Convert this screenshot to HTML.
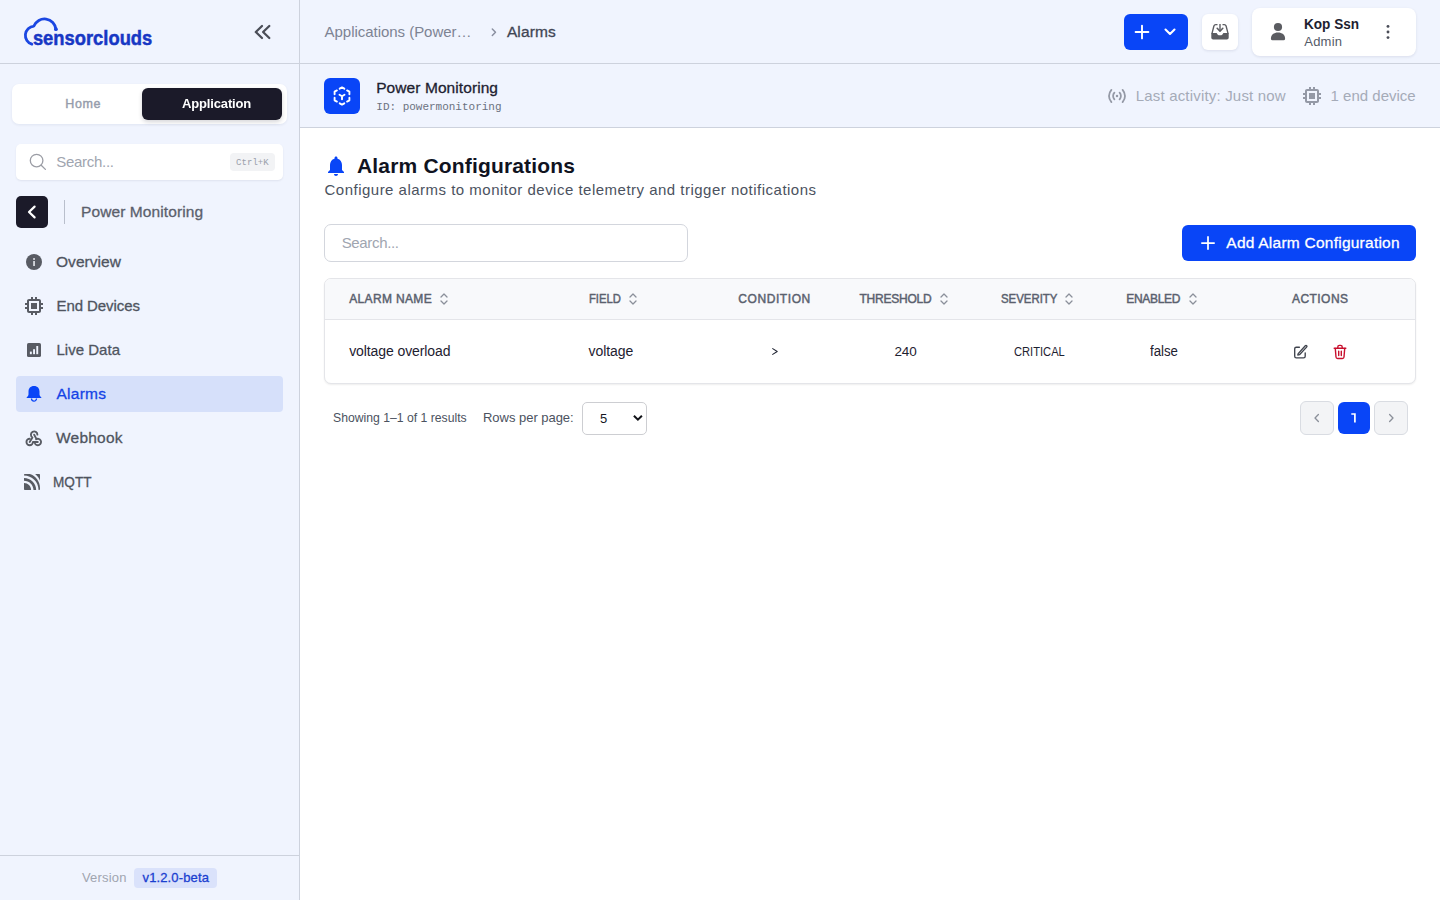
<!DOCTYPE html>
<html><head><meta charset="utf-8"><title>Alarms</title>
<style>
*{box-sizing:border-box;margin:0;padding:0}
html,body{width:1440px;height:900px;overflow:hidden;background:#fff;font-family:"Liberation Sans",sans-serif;color:#1d2130}
.t{position:absolute;white-space:nowrap;display:block}
.b{position:absolute;display:block}
svg{position:absolute;display:block;overflow:visible}

</style></head><body>
<!-- backgrounds -->
<div class="b" style="left:0;top:0;width:1440px;height:128px;background:#f0f4fe"></div>
<div class="b" style="left:0;top:0;width:300px;height:900px;background:#f0f4fe"></div>
<div class="b" style="left:299px;top:0;width:1px;height:900px;background:#cdd2dd"></div>
<div class="b" style="left:0;top:63px;width:1440px;height:1px;background:#cdd2dd"></div>
<div class="b" style="left:300px;top:127px;width:1140px;height:1px;background:#cdd2dd"></div>
<div class="b" style="left:0;top:855px;width:299px;height:1px;background:#cdd2dd"></div>

<!-- logo -->
<svg style="left:0;top:0" width="170" height="60" viewBox="0 0 170 60">
  <path d="M31.900 44.200 A9.300 9.300 0 0 1 33.900 26.050 A11.450 11.450 0 0 1 55.900 29.200" fill="none" stroke="#1b47e2" stroke-width="2.800" stroke-linecap="round" stroke-linejoin="round"/>
  <circle cx="55.900" cy="29.200" r="1.900" fill="#1b47e2"/>
  <text x="32.900" y="45.300" font-family="Liberation Sans, sans-serif" font-weight="bold" font-size="20.800" fill="#1737c4" stroke="#1737c4" stroke-width="0.500" textLength="119.400" lengthAdjust="spacingAndGlyphs">sensorclouds</text>
</svg>
<!-- collapse -->
<svg style="left:254px;top:24px" width="18" height="16" viewBox="0 0 18 16"><path d="M8 2 L1.800 8 L8 14 M15.300 2 L9.100 8 L15.300 14" fill="none" stroke="#4b4e58" stroke-width="2.300" stroke-linecap="round" stroke-linejoin="round"/></svg>

<!-- tabs -->
<div class="b" style="left:12px;top:84px;width:275px;height:40px;background:#fff;border-radius:7px;box-shadow:0 1px 3px rgba(20,30,70,.07)"></div>
<div class="b" style="left:142px;top:88px;width:140px;height:32px;background:#1b1a29;border-radius:6px;box-shadow:0 2px 4px rgba(20,20,40,.18)"></div>
<!-- sidebar search -->
<div class="b" style="left:16px;top:144px;width:267px;height:36px;background:#fff;border-radius:5px;box-shadow:0 1px 2px rgba(20,30,70,.08)"></div>
<svg style="left:29px;top:153px" width="18" height="18" viewBox="0 0 18 18"><circle cx="7.600" cy="7.600" r="6.300" fill="none" stroke="#9b9da5" stroke-width="1.300"/><path d="M12.200 12.200 L16.400 16.400" stroke="#9b9da5" stroke-width="1.300" stroke-linecap="round"/></svg>
<div class="b" style="left:230px;top:153px;width:45px;height:18px;background:#f2f3f5;border-radius:4px"></div>
<!-- back -->
<div class="b" style="left:16px;top:196px;width:32px;height:32px;background:#1b1a29;border-radius:5px"></div>
<svg style="left:26px;top:205px" width="12" height="14" viewBox="0 0 12 14"><path d="M8.6 1.6 L3 7 L8.6 12.4" fill="none" stroke="#fff" stroke-width="2.2" stroke-linecap="round" stroke-linejoin="round"/></svg>
<div class="b" style="left:64px;top:200px;width:1px;height:24px;background:#b9bfcc"></div>

<!-- nav active bg -->
<div class="b" style="left:16px;top:376px;width:267px;height:36px;background:#d6e0fa;border-radius:4px"></div>
<!-- nav icons -->
<svg style="left:26px;top:254px" width="16" height="16" viewBox="0 0 16 16"><circle cx="8" cy="8" r="8" fill="#585b63"/><rect x="7.2" y="7" width="1.7" height="5" fill="#dfe1e6"/><rect x="7.2" y="4.1" width="1.7" height="1.8" fill="#dfe1e6"/></svg>
<svg style="left:22px;top:294px" width="24" height="24" viewBox="0 0 24 24"><path fill="#585b63" d="M15 9H9v6h6V9zm6 2V9h-2V7c0-1.100-.9-2-2-2h-2V3h-2v2h-2V3H9v2H7c-1.100 0-2 .9-2 2v2H3v2h2v2H3v2h2v2c0 1.100.9 2 2 2h2v2h2v-2h2v2h2v-2h2c1.100 0 2-.9 2-2v-2h2v-2h-2v-2h2zm-4 6H7V7h10v10z"/></svg>
<svg style="left:27px;top:343px" width="14" height="14" viewBox="0 0 14 14"><rect x="0" y="0" width="14" height="14" rx="1.6" fill="#585b63"/><rect x="2.9" y="8.6" width="1.9" height="2.6" fill="#f0f4fe"/><rect x="6.1" y="6.2" width="1.9" height="5" fill="#f0f4fe"/><rect x="9.3" y="3" width="1.9" height="8.200" fill="#f0f4fe"/></svg>
<svg style="left:26px;top:386px" width="16" height="16" viewBox="0 0 16 16"><path fill="#0945f7" d="M8 0 C4.400 0 2.500 2.300 2.500 5.600 V8.300 C2.500 9.700 1.600 10.500 0.700 11.300 V12.100 H15.300 V11.300 C14.400 10.500 13.500 9.700 13.500 8.300 V5.600 C13.500 2.300 11.600 0 8 0 Z"/><path d="M5.500 12.600 A2.500 2.500 0 0 0 10.500 12.600" fill="none" stroke="#0945f7" stroke-width="1.300"/></svg>
<svg style="left:24.300px;top:429.200px" width="19.500" height="19.500" viewBox="0 0 24 24" fill="none" stroke="#585b63" stroke-width="2.300" stroke-linecap="round" stroke-linejoin="round"><path d="M16.500 7 A4 4 0 1 0 10.400 10.400 L7 16"/><path d="M7 12 A4 4 0 1 0 11 16 L17 16"/><path d="M12.500 7 L15.300 12.200"/><path d="M15 12.540 A4 4 0 1 1 13.540 18"/></svg>
<svg style="left:24px;top:474px" width="16" height="16" viewBox="0 0 24 24"><path fill="#585b63" d="M10.657 23.994h-9.450A1.212 1.212 0 0 1 0 22.788v-9.180h.071c5.784 0 10.504 4.650 10.586 10.386Zm7.606 0h-4.045C14.135 16.246 7.795 9.977 0 9.977V6.024c9.954 0 18.176 8.030 18.263 17.970Zm4.530 0h-.970C21.754 12.071 11.995 2.407 0 2.407v-1.200A1.212 1.212 0 0 1 1.207 0h7.630C17.503 2.757 24 11.043 24 21.009v1.779a1.210 1.210 0 0 1-1.207 1.206ZM16.713.006h6.080A1.212 1.212 0 0 1 24 1.212v8.844C22.595 6.128 19.950 2.601 16.713.006Z"/></svg>

<!-- version badge -->
<div class="b" style="left:134px;top:868px;width:83px;height:20px;background:#dae2fb;border-radius:4px"></div>

<!-- breadcrumb chevron -->
<svg style="left:490px;top:27px" width="8" height="11" viewBox="0 0 8 11"><path d="M2.300 1.900 L5.500 5.200 L2.300 8.500" fill="none" stroke="#8a8fa0" stroke-width="1.450" stroke-linecap="round" stroke-linejoin="round"/></svg>

<!-- top right: plus button -->
<div class="b" style="left:1124px;top:14px;width:64px;height:36px;background:#0945f7;border-radius:6px"></div>
<svg style="left:1135px;top:25px" width="14" height="14" viewBox="0 0 14 14"><path d="M7 0.600 V13.400 M0.600 7 H13.400" stroke="#fff" stroke-width="1.9" stroke-linecap="round"/></svg>
<svg style="left:1164px;top:28px" width="12" height="8" viewBox="0 0 12 8"><path d="M1.500 1.600 L6 6 L10.500 1.600" fill="none" stroke="#fff" stroke-width="2.1" stroke-linecap="round" stroke-linejoin="round"/></svg>
<!-- inbox button -->
<div class="b" style="left:1202px;top:14px;width:36px;height:36px;background:#fff;border-radius:6px;box-shadow:0 1px 3px rgba(20,30,70,.10)"></div>
<svg style="left:1211px;top:24px" width="18" height="16" viewBox="0 0 18 16"><path d="M0.300 9 H5.600 L6.600 10.600 Q7 11.300 7.800 11.300 H10.200 Q11 11.300 11.400 10.600 L12.400 9 H17.700 V13.800 Q17.700 15.600 15.900 15.600 H2.100 Q0.300 15.600 0.300 13.800 Z" fill="#5b5c61"/><path d="M0.950 9.600 L2.900 2 Q3.300 0.650 4.800 0.650 H6.500 M11.500 0.650 H13.200 Q14.700 0.650 15.100 2 L17.050 9.600" fill="none" stroke="#5b5c61" stroke-width="1.350"/><path d="M9 0 V6.400" fill="none" stroke="#5b5c61" stroke-width="1.400"/><path d="M6.200 4.300 L9 7.200 L11.800 4.300" fill="none" stroke="#5b5c61" stroke-width="1.600" stroke-linejoin="round" stroke-linecap="round"/></svg>
<!-- user card -->
<div class="b" style="left:1252px;top:8px;width:164px;height:48px;background:#fff;border-radius:8px;box-shadow:0 1px 3px rgba(20,30,70,.10)"></div>
<svg style="left:1270px;top:22px" width="16" height="19" viewBox="0 0 16 19"><circle cx="8" cy="5" r="4.100" fill="#5b5c61"/><path d="M0.900 16.700 C0.900 12.600 3.900 10.500 8 10.500 C12.100 10.500 15.100 12.600 15.100 16.700 Q15.100 18.300 13.500 18.300 H2.500 Q0.900 18.300 0.900 16.700 Z" fill="#5b5c61"/></svg>
<svg style="left:1385px;top:24px" width="6" height="16" viewBox="0 0 6 16"><circle cx="3" cy="2.400" r="1.450" fill="#4a4d57"/><circle cx="3" cy="8" r="1.450" fill="#4a4d57"/><circle cx="3" cy="13.600" r="1.450" fill="#4a4d57"/></svg>

<!-- sub header -->
<div class="b" style="left:324px;top:78px;width:36px;height:36px;background:#0945f7;border-radius:6px"></div>
<svg style="left:332px;top:86px" width="20" height="20" viewBox="-10 -10 20 20" fill="none" stroke="#fff" stroke-width="1.900" stroke-linecap="round" stroke-linejoin="round"><path d="M-2.300 -7.300 L0 -8.600 L2.300 -7.300 M5.100 -5.600 L7.400 -4.300 V-1.800 M7.400 1.800 V4.300 L5.100 5.600 M2.300 7.300 L0 8.600 L-2.300 7.300 M-5.100 5.600 L-7.400 4.300 V1.800 M-7.400 -1.800 V-4.300 L-5.100 -5.600"/><path d="M-2.500 -1.300 L0 0.200 L2.500 -1.300 M0 0.200 V3.200"/></svg>
<svg style="left:1107px;top:88px" width="20" height="16" viewBox="0 0 20 16" fill="none" stroke="#9499a6" stroke-width="1.800" stroke-linecap="round"><circle cx="10" cy="8" r="1.250" fill="#9499a6" stroke="none"/><path d="M7.400 4.700 Q6.100 6.200 6.100 8 Q6.100 9.800 7.400 11.300 M12.600 4.700 Q13.900 6.200 13.900 8 Q13.900 9.800 12.600 11.300"/><path d="M4.400 1.900 Q2 4.700 2 8 Q2 11.300 4.400 14.100 M15.600 1.900 Q18 4.700 18 8 Q18 11.300 15.600 14.100"/></svg>
<svg style="left:1300px;top:84px" width="24" height="24" viewBox="0 0 24 24"><path fill="#9499a6" d="M15 9H9v6h6V9zm6 2V9h-2V7c0-1.100-.9-2-2-2h-2V3h-2v2h-2V3H9v2H7c-1.100 0-2 .9-2 2v2H3v2h2v2H3v2h2v2c0 1.100.9 2 2 2h2v2h2v-2h2v2h2v-2h2c1.100 0 2-.9 2-2v-2h2v-2h-2v-2h2zm-4 6H7V7h10v10z"/></svg>

<!-- title bell -->
<svg style="left:324px;top:153.700px" width="24" height="24" viewBox="0 0 24 24"><path fill="#0945f7" d="M12 22c1.100 0 2-.9 2-2h-4c0 1.100.890 2 2 2zm6-6v-5c0-3.070-1.640-5.640-4.500-6.320V4c0-.830-.670-1.500-1.500-1.500s-1.500.670-1.500 1.500v.680C7.630 5.360 6 7.920 6 11v5l-2 2v1h16v-1l-2-2z"/></svg>

<!-- search input -->
<div class="b" style="left:324px;top:224px;width:364px;height:38px;background:#fff;border:1px solid #d3d6dd;border-radius:7px"></div>
<!-- add button -->
<div class="b" style="left:1182px;top:225px;width:234px;height:36px;background:#0945f7;border-radius:6px"></div>
<svg style="left:1201px;top:236px" width="14" height="14" viewBox="0 0 14 14"><path d="M7 0.900 V13.100 M0.900 7 H13.100" stroke="#fff" stroke-width="1.750" stroke-linecap="round"/></svg>

<!-- table -->
<div class="b" style="left:324px;top:278px;width:1092px;height:106px;background:#fff;border:1px solid #e4e5e9;border-radius:7px;box-shadow:0 1px 2px rgba(0,0,0,.07);overflow:hidden">
  <div style="height:41px;background:#f8f9fb;border-bottom:1px solid #e4e5e9"></div>
</div>
<!-- sort icons -->
<svg style="left:440.0px;top:292px" width="8" height="14" viewBox="0 0 8 14"><path d="M1 5 L4 2 L7 5 M1 9 L4 12 L7 9" fill="none" stroke="#8b909a" stroke-width="1.3" stroke-linecap="round" stroke-linejoin="round"/></svg>
<svg style="left:628.7px;top:292px" width="8" height="14" viewBox="0 0 8 14"><path d="M1 5 L4 2 L7 5 M1 9 L4 12 L7 9" fill="none" stroke="#8b909a" stroke-width="1.3" stroke-linecap="round" stroke-linejoin="round"/></svg>
<svg style="left:939.9px;top:292px" width="8" height="14" viewBox="0 0 8 14"><path d="M1 5 L4 2 L7 5 M1 9 L4 12 L7 9" fill="none" stroke="#8b909a" stroke-width="1.3" stroke-linecap="round" stroke-linejoin="round"/></svg>
<svg style="left:1065.2px;top:292px" width="8" height="14" viewBox="0 0 8 14"><path d="M1 5 L4 2 L7 5 M1 9 L4 12 L7 9" fill="none" stroke="#8b909a" stroke-width="1.3" stroke-linecap="round" stroke-linejoin="round"/></svg>
<svg style="left:1188.7px;top:292px" width="8" height="14" viewBox="0 0 8 14"><path d="M1 5 L4 2 L7 5 M1 9 L4 12 L7 9" fill="none" stroke="#8b909a" stroke-width="1.3" stroke-linecap="round" stroke-linejoin="round"/></svg>
<!-- condition > -->
<svg style="left:771px;top:347px" width="8" height="9" viewBox="0 0 8 9"><path d="M1.700 1.600 L6.200 4.500 L1.700 7.400" fill="none" stroke="#1d2130" stroke-width="1.050" stroke-linecap="round" stroke-linejoin="round"/></svg>
<!-- edit -->
<svg style="left:1293px;top:344px" width="15" height="15" viewBox="0 0 15 15" fill="none" stroke="#3f434d" stroke-width="1.350" stroke-linecap="round" stroke-linejoin="round"><path d="M6.400 3.200 H3.300 Q1.700 3.200 1.700 4.800 V12.200 Q1.700 13.800 3.300 13.800 H10.600 Q12.200 13.800 12.200 12.200 V8.800"/><path d="M5.200 9.600 L12.300 1.700 Q13 1 13.700 1.700 Q14.300 2.400 13.600 3.100 L6.500 10.700 L4.800 11 Z"/></svg>
<!-- trash -->
<svg style="left:1333px;top:344px" width="14" height="16" viewBox="0 0 14 16" fill="none" stroke="#c8102e" stroke-width="1.400" stroke-linecap="round" stroke-linejoin="round"><path d="M1.200 4.300 H12.800"/><path d="M4.800 4.100 V3 Q4.800 1.400 6.400 1.400 H7.600 Q9.200 1.400 9.200 3 V4.100"/><path d="M2.300 4.500 L3 13 Q3.100 14.500 4.600 14.500 H9.400 Q10.900 14.500 11 13 L11.700 4.500"/><path d="M5.700 7.200 V11.600 M8.300 7.200 V11.600"/></svg>
<!-- select -->
<div class="b" style="left:582px;top:402px;width:65px;height:33px;background:#fff;border:1px solid #cdced2;border-radius:5px"></div>
<svg style="left:633px;top:414px" width="11" height="8" viewBox="0 0 11 8"><path d="M0.900 1.700 L4.900 5.600 L8.900 1.700" fill="none" stroke="#111318" stroke-width="2" stroke-linecap="butt" stroke-linejoin="miter"/></svg>
<!-- pagination -->
<div class="b" style="left:1300px;top:401px;width:34px;height:34px;background:#f3f4f6;border:1px solid #d9dce2;border-radius:6px"></div>
<svg style="left:1313px;top:413px" width="8" height="10" viewBox="0 0 8 10"><path d="M5.400 1.500 L2 5 L5.400 8.500" fill="none" stroke="#8b909a" stroke-width="1.300" stroke-linecap="round" stroke-linejoin="round"/></svg>
<div class="b" style="left:1338px;top:402px;width:32px;height:32px;background:#0945f7;border-radius:6px"></div>
<div class="b" style="left:1374px;top:401px;width:34px;height:34px;background:#f3f4f6;border:1px solid #d9dce2;border-radius:6px"></div>
<svg style="left:1387px;top:413px" width="8" height="10" viewBox="0 0 8 10"><path d="M2.600 1.500 L6 5 L2.600 8.500" fill="none" stroke="#8b909a" stroke-width="1.300" stroke-linecap="round" stroke-linejoin="round"/></svg>
<svg style="left:1350px;top:412px" width="8" height="12" viewBox="0 0 8 12"><path d="M1.300 2 H4.900 V10.400" fill="none" stroke="#fff" stroke-width="1.700" stroke-linejoin="miter"/></svg>

<span class="t" style="left:65.30px;top:98.00px;font:normal 12.5px/12.5px 'Liberation Sans',sans-serif;color:#959cab;letter-spacing:0.585px;-webkit-text-stroke:0.4px #959cab">Home</span>
<span class="t" style="left:181.70px;top:97.00px;font:bold 13px/13px 'Liberation Sans',sans-serif;color:#ffffff;letter-spacing:-0.148px;will-change:transform">Application</span>
<span class="t" style="left:56.30px;top:154.00px;font:normal 15px/15px 'Liberation Sans',sans-serif;color:#a0a5b0;letter-spacing:-0.291px;">Search...</span>
<span class="t" style="left:236.00px;top:159.00px;font:normal 9px/9px 'Liberation Mono',monospace;color:#9aa0ab;letter-spacing:0.059px;">Ctrl+K</span>
<span class="t" style="left:81.00px;top:204.00px;font:normal 15.5px/15.5px 'Liberation Sans',sans-serif;color:#5b606c;letter-spacing:0.093px;-webkit-text-stroke:0.3px #5b606c">Power Monitoring</span>
<span class="t" style="left:56.00px;top:254.00px;font:normal 15.5px/15.5px 'Liberation Sans',sans-serif;color:#4f545f;letter-spacing:0.056px;-webkit-text-stroke:0.3px #4f545f">Overview</span>
<span class="t" style="left:56.50px;top:298.00px;font:normal 15px/15px 'Liberation Sans',sans-serif;color:#4f545f;letter-spacing:-0.072px;-webkit-text-stroke:0.3px #4f545f">End Devices</span>
<span class="t" style="left:56.50px;top:342.00px;font:normal 15px/15px 'Liberation Sans',sans-serif;color:#4f545f;letter-spacing:0.016px;-webkit-text-stroke:0.3px #4f545f">Live Data</span>
<span class="t" style="left:56.50px;top:386.00px;font:normal 15.5px/15.5px 'Liberation Sans',sans-serif;color:#1443e6;letter-spacing:0.253px;-webkit-text-stroke:0.3px #1443e6">Alarms</span>
<span class="t" style="left:56.00px;top:430.00px;font:normal 15.5px/15.5px 'Liberation Sans',sans-serif;color:#4f545f;letter-spacing:0.216px;-webkit-text-stroke:0.3px #4f545f">Webhook</span>
<span class="t" style="left:52.50px;top:475.00px;font:normal 14.5px/14.5px 'Liberation Sans',sans-serif;color:#4f545f;letter-spacing:0.000px;transform:scaleX(0.9372);transform-origin:0 0;-webkit-text-stroke:0.3px #4f545f">MQTT</span>
<span class="t" style="left:82.00px;top:871.00px;font:normal 13px/13px 'Liberation Sans',sans-serif;color:#a0a5b0;letter-spacing:0.171px;">Version</span>
<span class="t" style="left:142.50px;top:871.00px;font:normal 13px/13px 'Liberation Sans',sans-serif;color:#1a3fd0;letter-spacing:0.135px;-webkit-text-stroke:0.3px #1a3fd0">v1.2.0-beta</span>
<span class="t" style="left:324.60px;top:24.00px;font:normal 15px/15px 'Liberation Sans',sans-serif;color:#7d8393;letter-spacing:-0.035px;">Applications (Power…</span>
<span class="t" style="left:506.90px;top:24.00px;font:normal 15.5px/15.5px 'Liberation Sans',sans-serif;color:#3f4554;letter-spacing:0.133px;-webkit-text-stroke:0.3px #3f4554">Alarms</span>
<span class="t" style="left:1304.30px;top:17.00px;font:bold 14.5px/14.5px 'Liberation Sans',sans-serif;color:#1d2130;letter-spacing:0.000px;transform:scaleX(0.9352);transform-origin:0 0;">Kop Ssn</span>
<span class="t" style="left:1304.30px;top:35.00px;font:normal 13px/13px 'Liberation Sans',sans-serif;color:#555b68;letter-spacing:0.210px;">Admin</span>
<span class="t" style="left:376.20px;top:80.00px;font:normal 15.5px/15.5px 'Liberation Sans',sans-serif;color:#1d2130;letter-spacing:0.079px;-webkit-text-stroke:0.3px #1d2130">Power Monitoring</span>
<span class="t" style="left:376.30px;top:102.00px;font:normal 11px/11px 'Liberation Mono',monospace;color:#6b7280;letter-spacing:-0.012px;">ID: powermonitoring</span>
<span class="t" style="left:1135.70px;top:88.00px;font:normal 15px/15px 'Liberation Sans',sans-serif;color:#a5abb8;letter-spacing:0.186px;">Last activity: Just now</span>
<span class="t" style="left:1330.60px;top:88.00px;font:normal 15px/15px 'Liberation Sans',sans-serif;color:#a5abb8;letter-spacing:0.002px;">1 end device</span>
<span class="t" style="left:357.00px;top:155.00px;font:bold 21px/21px 'Liberation Sans',sans-serif;color:#10131f;letter-spacing:0.174px;">Alarm Configurations</span>
<span class="t" style="left:324.50px;top:182.00px;font:normal 15px/15px 'Liberation Sans',sans-serif;color:#4b5260;letter-spacing:0.490px;">Configure alarms to monitor device telemetry and trigger notifications</span>
<span class="t" style="left:341.70px;top:235.00px;font:normal 15px/15px 'Liberation Sans',sans-serif;color:#a0a5b0;letter-spacing:-0.341px;">Search...</span>
<span class="t" style="left:1226.30px;top:235.00px;font:normal 15.5px/15.5px 'Liberation Sans',sans-serif;color:#ffffff;letter-spacing:0.240px;-webkit-text-stroke:0.3px #fff">Add Alarm Configuration</span>
<span class="t" style="left:349.20px;top:293.00px;font:normal 12px/12px 'Liberation Sans',sans-serif;color:#5a616e;letter-spacing:0.349px;-webkit-text-stroke:0.45px #5a616e">ALARM NAME</span>
<span class="t" style="left:588.60px;top:293.00px;font:normal 12px/12px 'Liberation Sans',sans-serif;color:#5a616e;letter-spacing:0.000px;transform:scaleX(0.9378);transform-origin:0 0;-webkit-text-stroke:0.45px #5a616e">FIELD</span>
<span class="t" style="left:738.30px;top:293.00px;font:normal 12px/12px 'Liberation Sans',sans-serif;color:#5a616e;letter-spacing:0.582px;-webkit-text-stroke:0.45px #5a616e">CONDITION</span>
<span class="t" style="left:859.40px;top:293.00px;font:normal 12px/12px 'Liberation Sans',sans-serif;color:#5a616e;letter-spacing:-0.214px;-webkit-text-stroke:0.45px #5a616e">THRESHOLD</span>
<span class="t" style="left:1000.60px;top:293.00px;font:normal 12px/12px 'Liberation Sans',sans-serif;color:#5a616e;letter-spacing:0.000px;transform:scaleX(0.9501);transform-origin:0 0;-webkit-text-stroke:0.45px #5a616e">SEVERITY</span>
<span class="t" style="left:1126.20px;top:293.00px;font:normal 12px/12px 'Liberation Sans',sans-serif;color:#5a616e;letter-spacing:-0.289px;-webkit-text-stroke:0.45px #5a616e">ENABLED</span>
<span class="t" style="left:1292.00px;top:293.00px;font:normal 12px/12px 'Liberation Sans',sans-serif;color:#5a616e;letter-spacing:0.443px;-webkit-text-stroke:0.45px #5a616e">ACTIONS</span>
<span class="t" style="left:349.20px;top:344.00px;font:normal 14px/14px 'Liberation Sans',sans-serif;color:#1d2130;letter-spacing:-0.097px;">voltage overload</span>
<span class="t" style="left:588.60px;top:344.00px;font:normal 14px/14px 'Liberation Sans',sans-serif;color:#1d2130;letter-spacing:-0.076px;">voltage</span>
<span class="t" style="left:894.40px;top:345.00px;font:normal 13.5px/13.5px 'Liberation Sans',sans-serif;color:#1d2130;letter-spacing:-0.116px;">240</span>
<span class="t" style="left:1013.60px;top:346.00px;font:normal 12.5px/12.5px 'Liberation Sans',sans-serif;color:#1d2130;letter-spacing:0.000px;transform:scaleX(0.8920);transform-origin:0 0;">CRITICAL</span>
<span class="t" style="left:1149.50px;top:344.00px;font:normal 14px/14px 'Liberation Sans',sans-serif;color:#1d2130;letter-spacing:0.000px;transform:scaleX(0.9466);transform-origin:0 0;">false</span>
<span class="t" style="left:332.50px;top:411.00px;font:normal 13px/13px 'Liberation Sans',sans-serif;color:#4b5260;letter-spacing:0.000px;transform:scaleX(0.9391);transform-origin:0 0;">Showing 1–1 of 1 results</span>
<span class="t" style="left:483.00px;top:411.00px;font:normal 13px/13px 'Liberation Sans',sans-serif;color:#4b5260;letter-spacing:-0.028px;">Rows per page:</span>
<span class="t" style="left:599.60px;top:412.00px;font:normal 13px/13px 'Liberation Sans',sans-serif;color:#15171f;letter-spacing:0.000px;transform:scaleX(0.9994);transform-origin:0 0;">5</span>
</body></html>
